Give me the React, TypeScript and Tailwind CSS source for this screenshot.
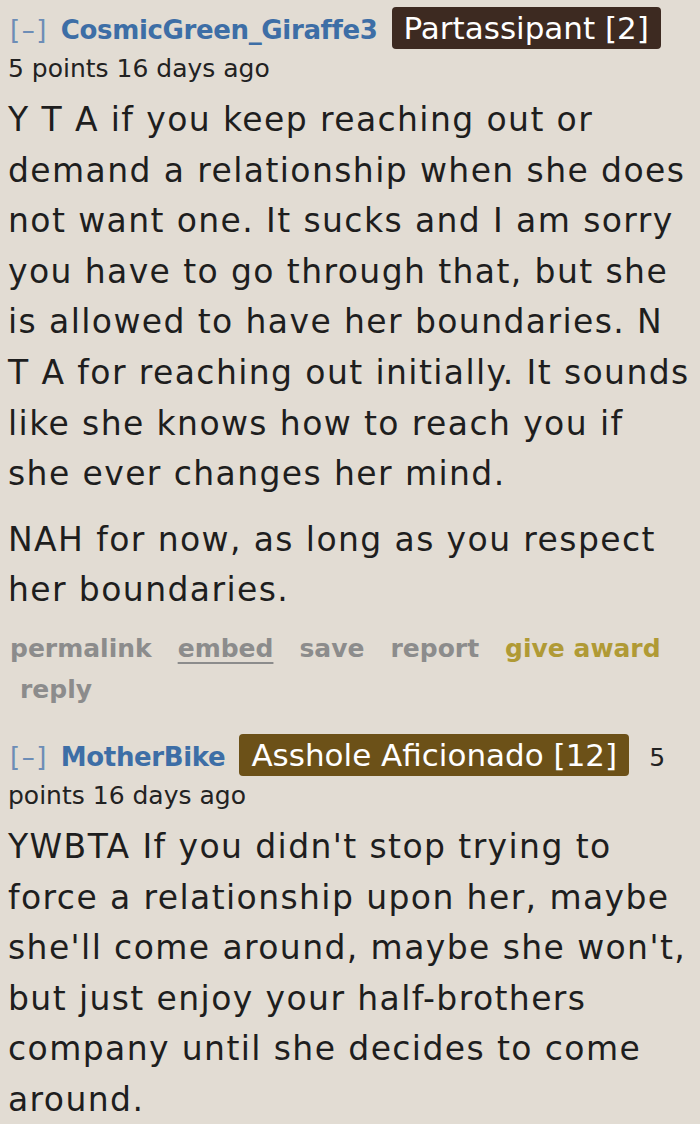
import React from 'react';

interface CommentProps {
  author: string;
  flair: string;
  flairColor: string;
  meta: React.ReactNode;
  paragraphs: string[][];
  actions?: boolean;
}

const verdana = { fontFamily: '"DejaVu Sans", Verdana, sans-serif' };

const Comment: React.FC<CommentProps> = ({ author, flair, flairColor, meta, paragraphs, actions }) => {
  return (
    <div style={verdana}>
      <div className="text-[25px] leading-[38px] text-[#222]">
        <span className="text-[#6d8db6] text-[26px] tracking-[1.5px] ml-[2px]">[–]</span>
        <span className="font-bold text-[#3d6ea6] text-[26px] tracking-[-0.35px] ml-[13px]">{author}</span>
        <span className={`${flairColor} text-white text-[31px] rounded-[4px] px-[12px] py-[3px] ml-[14px]`}>{flair}</span>
        {meta}
      </div>
      <div className="mt-[7px] text-[33px] tracking-[1.4px] leading-[50.6px] text-[#1e1e1e]">
        {paragraphs.map((p, i) => (
          <p key={i} className={i > 0 ? 'mt-[15px]' : ''}>
            {p.map((line, j) => (
              <span key={j} className="block whitespace-nowrap">{line}</span>
            ))}
          </p>
        ))}
      </div>
      {actions && (
        <div className="mt-[12px] text-[25px] leading-[41px] font-bold text-[#8c8c8c]">
          <div className="flex gap-x-[26px] pl-[2px]">
            <span>permalink</span>
            <span className="underline underline-offset-[5px] decoration-[2px]">embed</span>
            <span>save</span>
            <span>report</span>
            <span className="text-[#b09a35]">give award</span>
          </div>
          <div className="pl-[12px]">reply</div>
        </div>
      )}
    </div>
  );
};

export default function App() {
  return (
    <div className="min-h-[1124px] bg-[#e2dcd3] pl-[8px] pt-[9px] overflow-hidden">
      <Comment
        author="CosmicGreen_Giraffe3"
        flair="Partassipant [2]"
        flairColor="bg-[#3d2a21]"
        meta={<><br />5 points 16 days ago</>}
        paragraphs={[
          [
            'Y T A if you keep reaching out or',
            'demand a relationship when she does',
            'not want one. It sucks and I am sorry',
            'you have to go through that, but she',
            'is allowed to have her boundaries. N',
            'T A for reaching out initially. It sounds',
            'like she knows how to reach you if',
            'she ever changes her mind.',
          ],
          ['NAH for now, as long as you respect', 'her boundaries.'],
        ]}
        actions
      />
      <div className="mt-[26px]">
        <Comment
          author="MotherBike"
          flair="Asshole Aficionado [12]"
          flairColor="bg-[#6c5118]"
          meta={<><span className="ml-[20px]">5</span><br />points 16 days ago</>}
          paragraphs={[
            [
              "YWBTA If you didn't stop trying to",
              'force a relationship upon her, maybe',
              "she'll come around, maybe she won't,",
              'but just enjoy your half-brothers',
              'company until she decides to come',
              'around.',
            ],
          ]}
        />
      </div>
    </div>
  );
}
